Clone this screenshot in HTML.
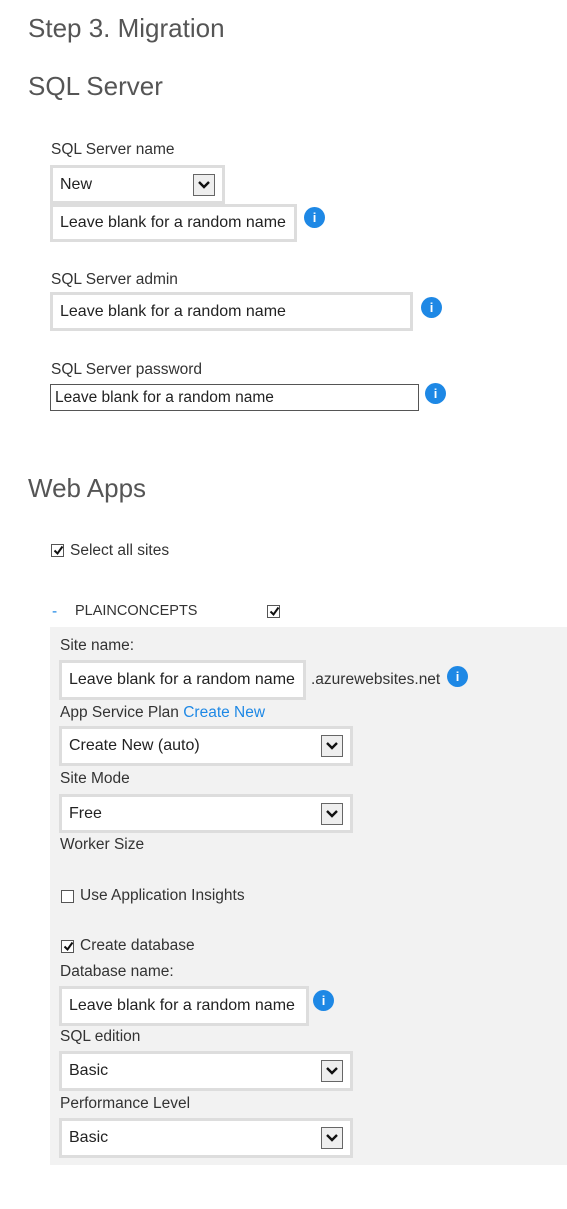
<!DOCTYPE html>
<html><head><meta charset="utf-8"><style>
body{margin:0;width:567px;height:1209px;background:#fff;position:relative;overflow:hidden;font-family:"Liberation Sans",sans-serif;color:#333;font-size:15.5px}
.a{position:absolute;white-space:nowrap}
.h{font-size:26px;color:#555;font-weight:normal}
.l{font-size:15.5px;color:#333}
.in{position:absolute;box-sizing:border-box;border:3px solid #ddd;background:#fff;font-size:16px;color:#222;padding-left:7px;display:flex;align-items:center}
.sel .ar{position:absolute;right:7px;top:50%;margin-top:-11px;width:22px;height:22px;box-sizing:border-box;border:1px solid #666;background:#eee}
.ar svg{position:absolute;left:3px;top:5px}
.i{position:absolute;width:21px;height:21px;border-radius:50%;background:#1e88e5;color:#fff;font-size:13px;font-weight:bold;text-align:center;line-height:21px;font-family:"Liberation Sans",sans-serif}
.cb{position:absolute;width:13px;height:13px;box-sizing:border-box;border:1px solid #555;background:#fff}
.cb svg{position:absolute;left:1px;top:0}
</style></head><body>
<div class="a h" style="left:28px;top:13px">Step 3. Migration</div>
<div class="a h" style="left:28px;top:71px">SQL Server</div>

<div class="a l" style="left:51px;top:141px">SQL Server name</div>
<div class="in sel" style="left:50px;top:165px;width:175px;height:39px">New<div class="ar"><svg width="14" height="10"><path d="M2 2 L7 7 L12 2" stroke="#111" stroke-width="2.4" fill="none"/></svg></div></div>
<div class="in" style="left:50px;top:204px;width:247px;height:38px">Leave blank for a random name</div>
<div class="i" style="left:304px;top:207px">i</div>

<div class="a l" style="left:51px;top:271px">SQL Server admin</div>
<div class="in" style="left:50px;top:292px;width:363px;height:39px">Leave blank for a random name</div>
<div class="i" style="left:421px;top:297px">i</div>

<div class="a l" style="left:51px;top:361px">SQL Server password</div>
<div class="in" style="left:50px;top:384px;width:369px;height:27px;border:1px solid #555;padding-left:4px;font-size:15.5px">Leave blank for a random name</div>
<div class="i" style="left:425px;top:383px">i</div>

<div class="a h" style="left:28px;top:473px">Web Apps</div>
<div class="cb" style="left:51px;top:544px"><svg width="11" height="11"><path d="M1.5 5.5 L4.5 8.5 L9.5 1.5" stroke="#111" stroke-width="2" fill="none"/></svg></div>
<div class="a l" style="left:70px;top:542px">Select all sites</div>

<div class="a l" style="left:52px;top:603px;color:#1e88e5">-</div>
<div class="a l" style="left:75px;top:603px;font-size:14.5px">PLAINCONCEPTS</div>
<div class="cb" style="left:267px;top:605px"><svg width="11" height="11"><path d="M1.5 5.5 L4.5 8.5 L9.5 1.5" stroke="#111" stroke-width="2" fill="none"/></svg></div>

<div class="a" style="left:50px;top:627px;width:517px;height:538px;background:#f2f2f2"></div>
<div class="a l" style="left:60px;top:637px">Site name:</div>
<div class="in" style="left:59px;top:660px;width:247px;height:40px">Leave blank for a random name</div>
<div class="a l" style="left:311px;top:671px">.azurewebsites.net</div>
<div class="i" style="left:447px;top:666px">i</div>

<div class="a l" style="left:60px;top:704px">App Service Plan <span style="color:#1e88e5">Create New</span></div>
<div class="in sel" style="left:59px;top:726px;width:294px;height:40px">Create New (auto)<div class="ar"><svg width="14" height="10"><path d="M2 2 L7 7 L12 2" stroke="#111" stroke-width="2.4" fill="none"/></svg></div></div>
<div class="a l" style="left:60px;top:770px">Site Mode</div>
<div class="in sel" style="left:59px;top:794px;width:294px;height:39px">Free<div class="ar"><svg width="14" height="10"><path d="M2 2 L7 7 L12 2" stroke="#111" stroke-width="2.4" fill="none"/></svg></div></div>
<div class="a l" style="left:60px;top:836px">Worker Size</div>

<div class="cb" style="left:61px;top:890px"></div>
<div class="a l" style="left:80px;top:887px">Use Application Insights</div>
<div class="cb" style="left:61px;top:940px"><svg width="11" height="11"><path d="M1.5 5.5 L4.5 8.5 L9.5 1.5" stroke="#111" stroke-width="2" fill="none"/></svg></div>
<div class="a l" style="left:80px;top:937px">Create database</div>
<div class="a l" style="left:60px;top:963px">Database name:</div>
<div class="in" style="left:59px;top:986px;width:250px;height:40px">Leave blank for a random name</div>
<div class="i" style="left:313px;top:990px">i</div>
<div class="a l" style="left:60px;top:1028px">SQL edition</div>
<div class="in sel" style="left:59px;top:1051px;width:294px;height:40px">Basic<div class="ar"><svg width="14" height="10"><path d="M2 2 L7 7 L12 2" stroke="#111" stroke-width="2.4" fill="none"/></svg></div></div>
<div class="a l" style="left:60px;top:1095px">Performance Level</div>
<div class="in sel" style="left:59px;top:1118px;width:294px;height:40px">Basic<div class="ar"><svg width="14" height="10"><path d="M2 2 L7 7 L12 2" stroke="#111" stroke-width="2.4" fill="none"/></svg></div></div>
</body></html>
